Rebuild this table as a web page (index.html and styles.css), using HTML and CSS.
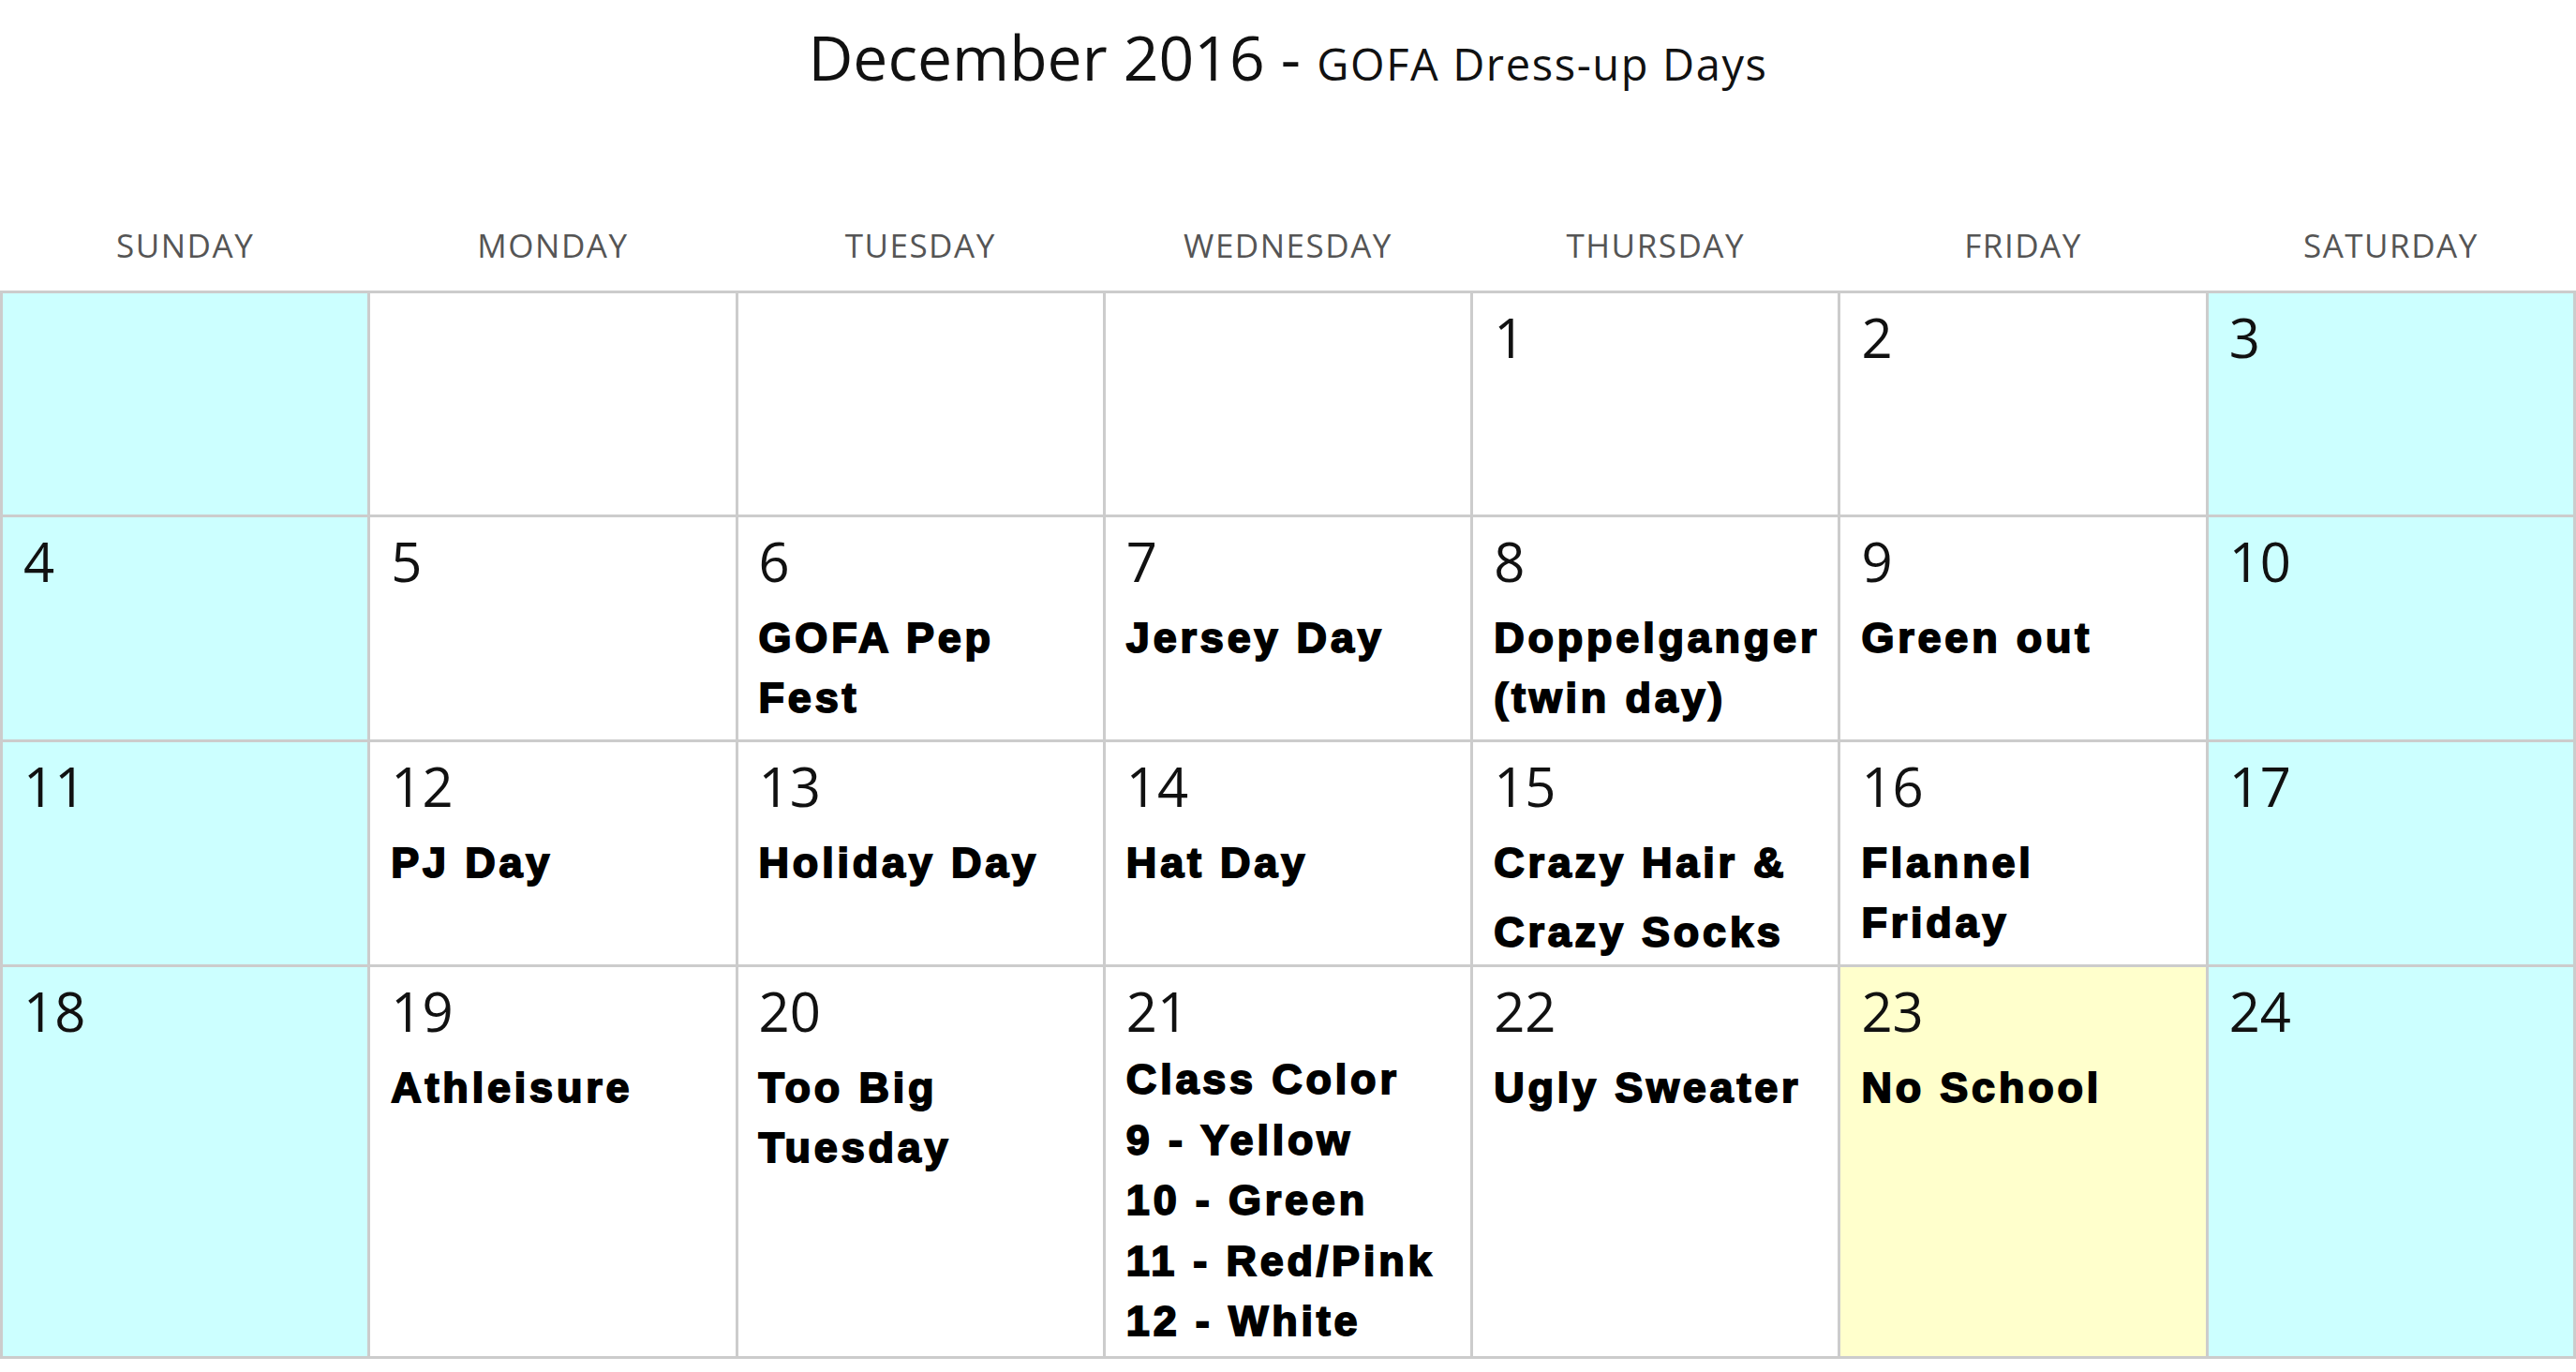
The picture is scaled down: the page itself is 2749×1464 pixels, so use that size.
FILE: index.html
```html
<!DOCTYPE html>
<html lang="en">
<head>
    <meta charset="UTF-8">
    <meta name="viewport" content="width=device-width, initial-scale=1.0">
    <title>December 2016 - GOFA Dress-up Days</title>
    <link rel="stylesheet" href="styles.css">
</head>
<body>
    <h1 class="title"><span class="month">December 2016 - </span><span class="subtitle">GOFA Dress-up Days</span></h1>

    <!-- Dias da semana -->
    <div class="weekdays">
        <div>Sunday</div>
        <div>Monday</div>
        <div>Tuesday</div>
        <div>Wednesday</div>
        <div>Thursday</div>
        <div>Friday</div>
        <div>Saturday</div>
    </div>

    <!-- Calendário -->
    <div class="calendar">
        <!-- semana 1 -->
        <div class="day weekend"></div>
        <div class="day"></div>
        <div class="day"></div>
        <div class="day"></div>
        <div class="day"><div class="num">1</div></div>
        <div class="day"><div class="num">2</div></div>
        <div class="day weekend"><div class="num">3</div></div>

        <!-- semana 2 -->
        <div class="day weekend"><div class="num">4</div></div>
        <div class="day"><div class="num">5</div></div>
        <div class="day"><div class="num">6</div><div class="event">GOFA Pep<br>Fest</div></div>
        <div class="day"><div class="num">7</div><div class="event">Jersey Day</div></div>
        <div class="day"><div class="num">8</div><div class="event">Doppelganger<br>(twin day)</div></div>
        <div class="day"><div class="num">9</div><div class="event">Green out</div></div>
        <div class="day weekend"><div class="num">10</div></div>

        <!-- semana 3 -->
        <div class="day weekend"><div class="num">11</div></div>
        <div class="day"><div class="num">12</div><div class="event">PJ Day</div></div>
        <div class="day"><div class="num">13</div><div class="event">Holiday Day</div></div>
        <div class="day"><div class="num">14</div><div class="event">Hat Day</div></div>
        <div class="day"><div class="num">15</div><div class="event">Crazy Hair &amp;<span class="gap"></span>Crazy Socks</div></div>
        <div class="day"><div class="num">16</div><div class="event">Flannel<br>Friday</div></div>
        <div class="day weekend"><div class="num">17</div></div>

        <!-- semana 4 -->
        <div class="day weekend"><div class="num">18</div></div>
        <div class="day"><div class="num">19</div><div class="event">Athleisure</div></div>
        <div class="day"><div class="num">20</div><div class="event">Too Big<br>Tuesday</div></div>
        <div class="day"><div class="num">21</div><div class="event event-list">Class Color<br>9 - Yellow<br>10 - Green<br>11 - Red/Pink<br>12 - White</div></div>
        <div class="day"><div class="num">22</div><div class="event">Ugly Sweater</div></div>
        <div class="day no-school"><div class="num">23</div><div class="event">No School</div></div>
        <div class="day weekend"><div class="num">24</div></div>
    </div>
</body>
</html>
```

FILE: styles.css
```css
/* Estilos gerais */
body {
    margin: 0;
    padding: 0;
    background: #fff;
    color: #111;
    font-family: 'Open Sans', 'Noto Sans', sans-serif;
}

.title {
    margin: 0;
    padding-top: 16px;
    font-weight: 400;
    line-height: 88px;
    text-align: center;
    color: #111;
}

.month {
    font-size: 66px;
}

.subtitle {
    font-size: 47px;
    letter-spacing: 1.6px;
}

/* Cabeçalho dos dias */
.weekdays {
    display: grid;
    grid-template-columns: repeat(7, 1fr);
    column-gap: 3px;
    padding: 0 3px;
    margin-top: 126px;
    margin-bottom: 31px;
    line-height: 35px;
    font-size: 35px;
    letter-spacing: 1.5px;
    text-transform: uppercase;
    text-align: center;
    color: #555;
}

/* Grade do calendário */
.calendar {
    display: grid;
    grid-template-columns: repeat(7, 1fr);
    grid-template-rows: 236px 237px 237px 415px;
    gap: 3px;
    padding: 3px;
    background: #cccccc;
}

.day {
    background: #fff;
    padding: 12px 14px 0 22px;
    overflow: hidden;
}

.weekend {
    background: #ccffff;
}

.no-school {
    background: #ffffcc;
}

.num {
    font-size: 58px;
    line-height: 70px;
    color: #111;
}

.event {
    margin-top: 15px;
    font-family: 'Liberation Sans', Arial, sans-serif;
    font-weight: 700;
    font-size: 45px;
    line-height: 64px;
    letter-spacing: 3.8px;
    -webkit-text-stroke: 1.9px #000;
    color: #000;
    white-space: nowrap;
}

.event .gap {
    display: block;
    height: 10px;
}

.event-list {
    margin-top: 6px;
    line-height: 64.5px;
}
```
